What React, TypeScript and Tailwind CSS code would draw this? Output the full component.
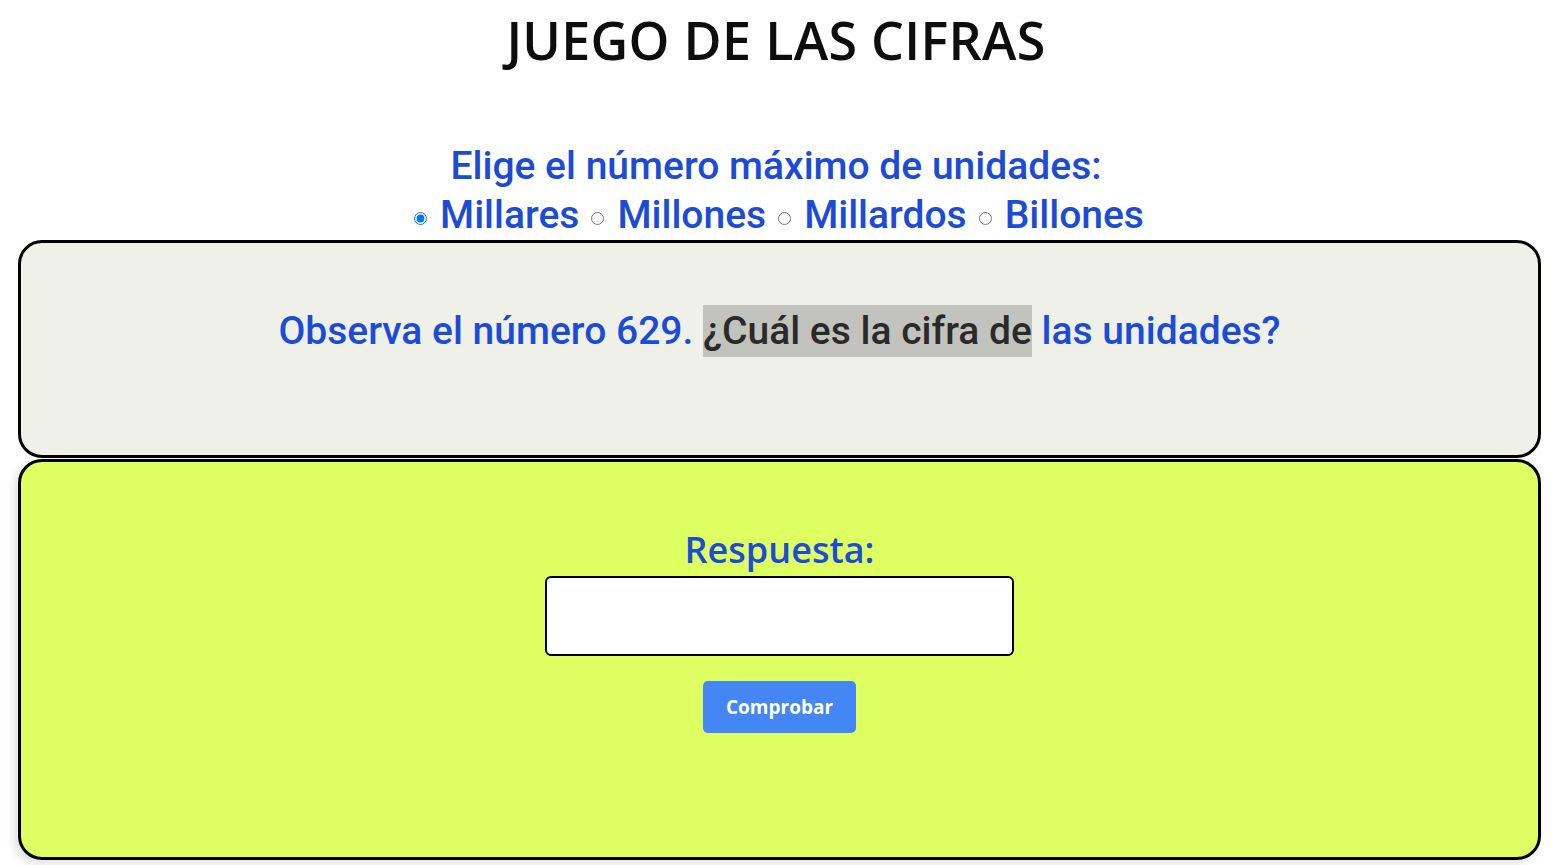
import React from "react";

export default function App() {
  const opts = ["Millares", "Millones", "Millardos", "Billones"];
  return (
    <div className="w-[1552px] h-[865px] overflow-hidden bg-white">
      <h1
        className="text-center text-[52px] font-semibold text-[#0d0d0d] leading-none pt-[14px] tracking-[0.3px]"
        style={{ fontFamily: "'Open Sans', sans-serif" }}
      >
        JUEGO DE LAS CIFRAS
      </h1>
      <div
        className="mt-[75px] text-center text-[#1c4bd6]"
        style={{ fontFamily: "Roboto, sans-serif" }}
      >
        <div className="text-[39px] font-medium leading-[50px]">Elige el número máximo de unidades:</div>
        <div className="flex items-center justify-center gap-[12px] text-[39px] font-medium leading-[50px] -mt-[1px] pl-[6px]">
          {opts.map((o, i) => (
            <label key={o} className="flex items-center gap-[13px]">
              <input
                type="radio"
                name="max"
                defaultChecked={i === 0}
                className="w-[13px] h-[13px] mt-[6px] m-0"
              />
              <span>{o}</span>
            </label>
          ))}
        </div>
      </div>
      <div className="ml-[18px] mr-[11px] mt-0 h-[218px] border-[3px] border-black rounded-[24px] bg-[#eff1e9] text-center">
        <p
          className="pt-[63px] text-[39px] font-medium leading-[51px] text-[#1c4bd6]"
          style={{ fontFamily: "Roboto, sans-serif" }}
        >
          Observa el número 629.{" "}
          <span className="bg-[#c3c3be] text-[#2a2a2a] py-[3px]">¿Cuál es la cifra de</span> las unidades?
        </p>
      </div>
      <div className="ml-[18px] mr-[11px] mt-[1px] h-[401px] border-[3px] border-black rounded-[24px] bg-[#deff62] shadow-[-4px_4px_10px_rgba(0,0,0,0.12)] flex flex-col items-center">
        <div
          className="mt-[63px] text-[36px] font-semibold leading-[50px] text-[#1c4bd6]"
          style={{ fontFamily: "'Open Sans', sans-serif" }}
        >
          Respuesta:
        </div>
        <input
          type="text"
          className="mt-[1px] w-[469px] h-[80px] bg-white border-2 border-black rounded-[6px] outline-none"
        />
        <button
          className="mt-[25px] w-[153px] h-[52px] rounded-[5px] bg-[#4486f3] text-white text-[19px] font-bold"
          style={{ fontFamily: "'Open Sans', sans-serif" }}
        >
          Comprobar
        </button>
      </div>
    </div>
  );
}
